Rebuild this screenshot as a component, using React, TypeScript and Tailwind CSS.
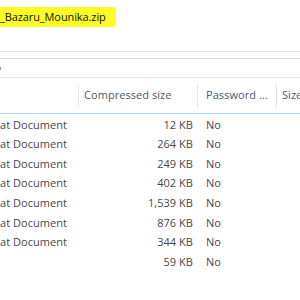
import React from 'react';

const rows = [
  { type: 'at Document', size: '12 KB', pw: 'No' },
  { type: 'at Document', size: '264 KB', pw: 'No' },
  { type: 'at Document', size: '249 KB', pw: 'No' },
  { type: 'at Document', size: '402 KB', pw: 'No' },
  { type: 'at Document', size: '1,539 KB', pw: 'No' },
  { type: 'at Document', size: '876 KB', pw: 'No' },
  { type: 'at Document', size: '344 KB', pw: 'No' },
  { type: '', size: '59 KB', pw: 'No' },
];

export default function App() {
  return (
    <div className="w-[300px] h-[300px] bg-white overflow-hidden text-[11px] tracking-[0.05px] font-['Open_Sans',sans-serif] text-[#474747]">
      {/* Title, highlighted */}
      <div className="h-[51px] pt-[7px]">
        <div className="w-[116px] h-[20px] bg-[#fbfb28] rounded-r-[3px] flex items-center">
          <span className="text-[11px] tracking-[-0.1px] text-[#111] whitespace-nowrap">_Bazaru_Mounika.zip</span>
        </div>
      </div>
      <div className="h-px bg-[#e3e3e3]" />
      <div className="h-[6px]" />
      <div className="h-px bg-[#d9d9d9]" />
      {/* Address / search strip */}
      <div className="h-[18px] flex items-center">
        <div className="w-px h-[3px] bg-[#9a9a9a]" />
      </div>
      <div className="h-px bg-[#e3e3e3]" />

      {/* Column header */}
      <div className="h-[35px] flex items-center text-[#4d5a6e] whitespace-nowrap">
        <div className="w-[78px] shrink-0" />
        <div className="w-px h-[22px] bg-[#e5e5e5] shrink-0" />
        <div className="w-[118px] pl-[5px] shrink-0">Compressed size</div>
        <div className="w-px h-[22px] bg-[#e5e5e5] shrink-0" />
        <div className="w-[78px] pl-[8px] shrink-0">Password ...</div>
        <div className="w-px h-[22px] bg-[#e5e5e5] shrink-0" />
        <div className="pl-[5px] shrink-0">Size</div>
      </div>
      <div className="h-px bg-[#a9d2f5]" />

      {/* Rows */}
      <div className="flex flex-col pt-[1px]">
        {rows.map((r, i) => (
          <div key={i} className="h-[19.6px] flex items-center whitespace-nowrap">
            <div className="w-[78px] shrink-0">{r.type}</div>
            <div className="w-[115px] shrink-0 text-right">{r.size}</div>
            <div className="pl-[13px]">{r.pw}</div>
          </div>
        ))}
      </div>
    </div>
  );
}
